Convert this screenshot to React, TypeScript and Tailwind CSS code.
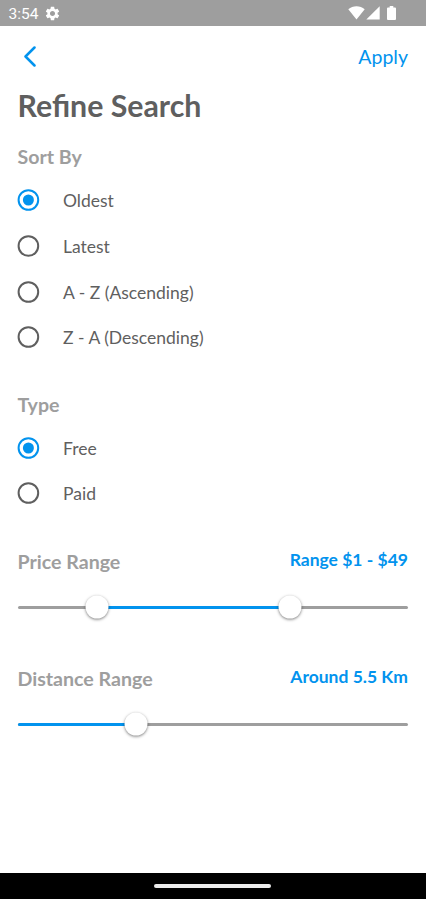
import { useState } from 'react';
import clsx from 'clsx';

const SORT_OPTIONS = ['Oldest', 'Latest', 'A - Z (Ascending)', 'Z - A (Descending)'];
const TYPE_OPTIONS = ['Free', 'Paid'];

function StatusBar() {
  return (
    <div className="flex h-[26px] shrink-0 items-center bg-[#9e9e9e] pr-[30px] pl-[8.5px] text-white">
      <span className="mt-[3px] w-[30px] font-[Roboto] text-[15.5px] leading-none whitespace-nowrap">
        3:54
      </span>
      <svg className="ml-[5.5px] h-[17px] w-[17px]" viewBox="0 0 24 24" fill="currentColor">
        <path d="M19.14 12.94c.04-.3.06-.61.06-.94 0-.32-.02-.64-.07-.94l2.03-1.58c.18-.14.23-.41.12-.61l-1.92-3.32c-.12-.22-.37-.29-.59-.22l-2.39.96c-.5-.38-1.03-.7-1.62-.94l-.36-2.54c-.04-.24-.24-.41-.48-.41h-3.84c-.24 0-.43.17-.47.41l-.36 2.54c-.59.24-1.13.57-1.62.94l-2.39-.96c-.22-.08-.47 0-.59.22L2.74 8.87c-.12.21-.08.47.12.61l2.03 1.58c-.05.3-.09.63-.09.94s.02.64.07.94l-2.03 1.58c-.18.14-.23.41-.12.61l1.92 3.32c.12.22.37.29.59.22l2.39-.96c.5.38 1.03.7 1.62.94l.36 2.54c.05.24.24.41.48.41h3.84c.24 0 .44-.17.47-.41l.36-2.54c.59-.24 1.13-.56 1.62-.94l2.39.96c.22.08.47 0 .59-.22l1.92-3.32c.12-.22.07-.47-.12-.61l-2.01-1.58zM12 15.6c-1.98 0-3.6-1.62-3.6-3.6s1.62-3.6 3.6-3.6 3.6 1.62 3.6 3.6-1.62 3.6-3.6 3.6z" />
      </svg>
      <div className="ml-auto flex items-center">
        <svg className="h-[14px] w-[17px]" viewBox="0 0 17 14" fill="currentColor">
          <path d="M8.5 13.6.3 3.3C2.6 1.4 5.4.3 8.5.3s5.900 1.100 8.200 3z" />
        </svg>
        <svg className="ml-px h-[14px] w-[14px]" viewBox="0 0 14 14" fill="currentColor">
          <path d="M13.700.2v13.400H.3z" />
        </svg>
        <svg className="ml-[7px] h-[14px] w-[9px]" viewBox="0 0 9 14" fill="currentColor">
          <path d="M2.700 0h3.600v1.400H8a1 1 0 0 1 1 1V13a1 1 0 0 1-1 1H1a1 1 0 0 1-1-1V2.400a1 1 0 0 1 1-1h1.700z" />
        </svg>
      </div>
    </div>
  );
}

function RadioGroup({
  options,
  value,
  onChange,
}: {
  options: string[];
  value: string;
  onChange: (option: string) => void;
}) {
  return (
    <div role="radiogroup">
      {options.map((option) => (
        <button
          key={option}
          role="radio"
          aria-checked={option === value}
          onClick={() => onChange(option)}
          className="flex h-[45.7px] w-full items-center"
        >
          <svg
            className={clsx(
              'h-[22px] w-[22px] overflow-visible',
              option === value && 'text-[#0293ee]',
            )}
            viewBox="0 0 22 22"
          >
            <circle cx="10.4" cy="11" r="9.8" fill="none" stroke="currentColor" strokeWidth="2" />
            {option === value && <circle cx="10.4" cy="11" r="5.5" fill="currentColor" />}
          </svg>
          <span className="mt-[2px] ml-[23.5px] text-[17.5px] leading-6">{option}</span>
        </button>
      ))}
    </div>
  );
}

function Thumb({ position }: { position: number }) {
  return (
    <span
      className="absolute top-1/2 h-[23px] w-[23px] -translate-x-1/2 -translate-y-1/2 rounded-full bg-white shadow-[0_1px_3px_rgba(0,0,0,0.5)]"
      style={{ left: `${position}%` }}
    />
  );
}

function Slider({ start, end }: { start?: number; end: number }) {
  const from = start ?? 0;

  return (
    <div className="relative h-[3px] rounded-full bg-[#9e9e9e]">
      <div
        className="h-full rounded-full bg-[#0293ee]"
        style={{ marginLeft: `${from}%`, width: `${end - from}%` }}
      />
      {start !== undefined && <Thumb position={start} />}
      <Thumb position={end} />
    </div>
  );
}

function RangeHeader({ title, value }: { title: string; value: string }) {
  return (
    <div className="flex h-7 items-start justify-between">
      <h2 className="mt-[2px] text-[19.6px] leading-6 font-bold text-[#9e9e9e]">{title}</h2>
      <span className="text-[17.5px] leading-6 font-bold text-[#0293ee]">{value}</span>
    </div>
  );
}

export default function App() {
  const [sortBy, setSortBy] = useState('Oldest');
  const [type, setType] = useState('Free');

  return (
    <div className="flex h-[899px] w-full flex-col bg-white font-[Lato,sans-serif] text-[#5f5f5f]">
      <StatusBar />
      <main className="flex-1 pr-[18px] pl-[17.5px]">
        <header className="flex h-[61px] items-center justify-between text-[#0293ee]">
          <button aria-label="Back" className="ml-[6px]">
            <svg
              className="h-[21px] w-[13px]"
              viewBox="0 0 13 21"
              fill="none"
              stroke="currentColor"
              strokeWidth="2.5"
              strokeLinecap="round"
              strokeLinejoin="round"
            >
              <path d="m10.500 1.500-9 9 9 9" />
            </svg>
          </button>
          <button className="text-[19.5px] leading-6">Apply</button>
        </header>
        <h1 className="-mt-px text-[30.300px] leading-[38px] font-bold">Refine Search</h1>
        <h2 className="mt-[21px] mb-[8.4px] text-[19.6px] leading-6 font-bold text-[#9e9e9e]">
          Sort By
        </h2>
        <RadioGroup options={SORT_OPTIONS} value={sortBy} onChange={setSortBy} />
        <h2 className="mt-[32.800px] mb-[8px] text-[19.6px] leading-6 font-bold text-[#9e9e9e]">
          Type
        </h2>
        <RadioGroup options={TYPE_OPTIONS} value={type} onChange={setType} />
        <section className="mt-[31.400px]">
          <RangeHeader title="Price Range" value="Range $1 - $49" />
          <div className="mt-[30px]">
            <Slider start={20.3} end={69.8} />
          </div>
        </section>
        <section className="mt-[56px]">
          <RangeHeader title="Distance Range" value="Around 5.5 Km" />
          <div className="mt-[30px]">
            <Slider end={30.300} />
          </div>
        </section>
      </main>
      <div className="flex h-[26px] shrink-0 items-center justify-center bg-black">
        <div className="mr-px h-1 w-[117px] rounded-full bg-[#ececec]" />
      </div>
    </div>
  );
}
